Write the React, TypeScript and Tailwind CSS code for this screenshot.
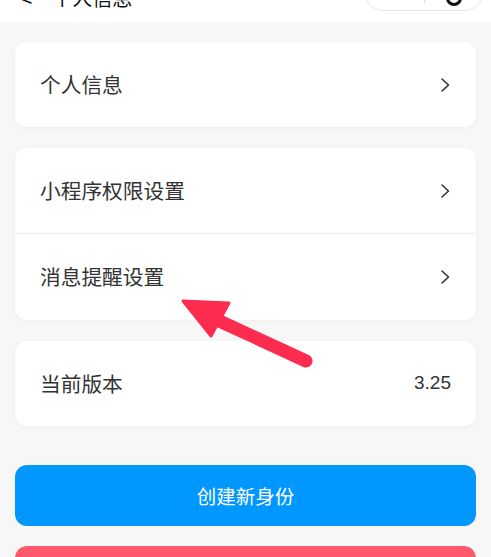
import React from "react";

const Chevron = () => (
  <svg width="12" height="16" viewBox="0 0 12 16" fill="none" className="shrink-0">
    <path d="M3 2 L9.5 8 L3 14" stroke="#333" strokeWidth="1.6" strokeLinecap="round" strokeLinejoin="round" />
  </svg>
);

const Row = ({ label, right, border, tall }: { label: string; right?: React.ReactNode; border?: boolean; tall?: boolean }) => (
  <div className={`flex ${tall ? "h-[86px]" : "h-[85px]"} items-center justify-between pl-[25px] pr-[25px] ${border ? "border-b border-[#eeeeee]" : ""}`}>
    <span className="text-[20.7px] text-[#333333]">{label}</span>
    {right ?? <Chevron />}
  </div>
);

export default function App() {
  return (
    <div
      className="relative h-[557px] w-[491px] overflow-hidden bg-[#f7f7f8]"
      style={{ fontFamily: '"Noto Sans CJK SC", "Noto Sans", sans-serif' }}
    >
      <div className="relative h-[22px] overflow-hidden bg-white">
        <div className="-mt-[19px] flex items-center pl-[20px]">
          <span className="text-[22px] text-[#111]">&lt;</span>
          <span className="ml-[20px] text-[20px] text-[#111]">个人信息</span>
        </div>
        <div className="absolute right-[8px] top-[-25px] flex h-[36px] w-[118px] items-center rounded-full border border-[#e6e6e6] bg-white">
          <div className="w-[58px]" />
          <div className="h-[20px] w-px bg-[#dddddd]" />
          <div className="flex flex-1 items-center justify-center">
            <div className="mt-[10px] h-[16px] w-[16px] rounded-full border-[3px] border-[#111]" />
          </div>
        </div>
      </div>

      <div className="flex flex-col px-[15px] pt-[20px]">
        <div className="rounded-[12px] bg-white shadow-[0_1px_6px_rgba(0,0,0,0.04)]">
          <Row label="个人信息" />
        </div>
        <div className="mt-[21px] rounded-[12px] bg-white shadow-[0_1px_6px_rgba(0,0,0,0.04)]">
          <Row label="小程序权限设置" border tall />
          <Row label="消息提醒设置" tall />
        </div>
        <div className="mt-[21px] rounded-[12px] bg-white shadow-[0_1px_6px_rgba(0,0,0,0.04)]">
          <Row label="当前版本" right={<span className="text-[19px] text-[#333333]" style={{ fontFamily: '"Liberation Sans", sans-serif' }}>3.25</span>} />
        </div>
        <button className="mt-[39px] flex h-[61px] items-center justify-center rounded-[12px] bg-[#0098ff] text-[19.5px] text-white">
          创建新身份
        </button>
        <div className="mt-[20px] h-[61px] rounded-[12px] bg-[#ff5a6b]" />
      </div>

      <svg className="absolute left-0 top-0" width="491" height="557" viewBox="0 0 491 557">
        <line x1="306" y1="361" x2="215" y2="319" stroke="#fd2c4e" strokeWidth="13" strokeLinecap="round" />
        <polygon points="183,301 229,303 211,336" fill="#fd2c4e" stroke="#fd2c4e" strokeWidth="3" strokeLinejoin="round" />
      </svg>
    </div>
  );
}
